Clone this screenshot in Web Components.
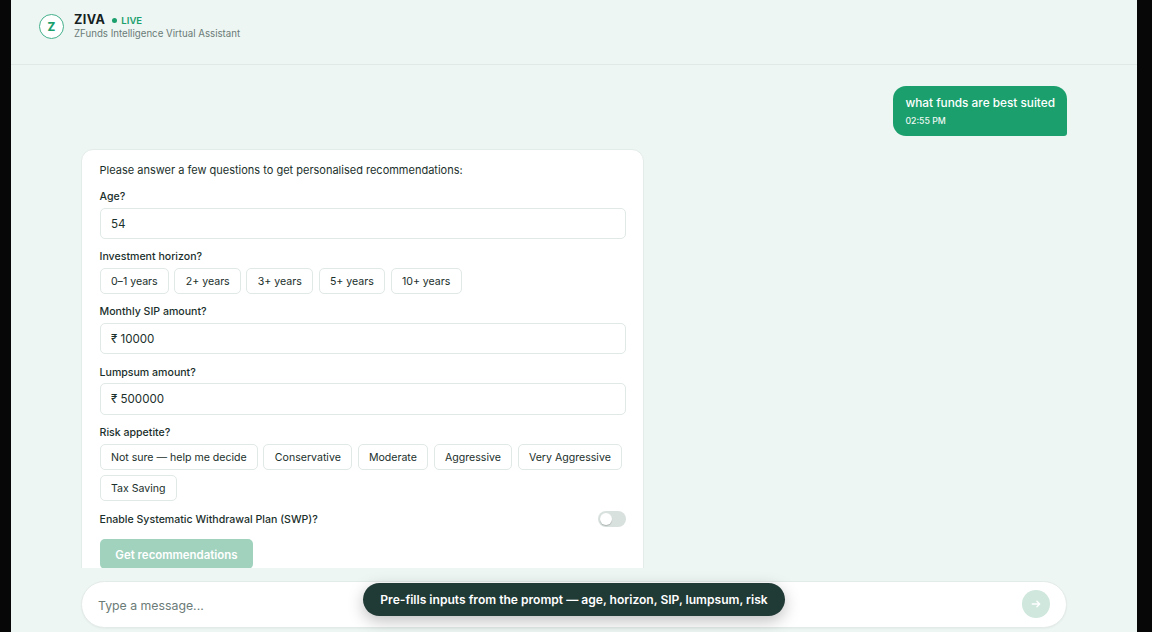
<!DOCTYPE html>
<html lang="en">
<head>
<meta charset="utf-8">
<title>ZIVA</title>
<style>
  html, body { height: 100%; margin: 0; }
  body {
    background: #070707;
    color: #1b302c;
    font-family: Inter, "Noto Sans", sans-serif;
    overflow: hidden;
    --green: #1b9f6d;
    --mint: #edf6f3;
    --line: #e0e9e6;
    --muted: #6b7b77;
  }
</style>
</head>
<body>
<ziva-app>
  <ziva-header slot="header" name="ZIVA" tagline="ZFunds Intelligence Virtual Assistant"></ziva-header>

  <user-message time="02:55 PM">what funds are best suited</user-message>

  <question-card>
    <span slot="intro">Please answer a few questions to get personalised recommendations:</span>
    <text-field label="Age?" value="54"></text-field>
    <chip-group label="Investment horizon?">
      <option-chip>0–1 years</option-chip>
      <option-chip>2+ years</option-chip>
      <option-chip>3+ years</option-chip>
      <option-chip>5+ years</option-chip>
      <option-chip>10+ years</option-chip>
    </chip-group>
    <text-field label="Monthly SIP amount?" value="₹ 10000"></text-field>
    <text-field label="Lumpsum amount?" value="₹ 500000"></text-field>
    <chip-group label="Risk appetite?">
      <option-chip>Not sure — help me decide</option-chip>
      <option-chip>Conservative</option-chip>
      <option-chip>Moderate</option-chip>
      <option-chip>Aggressive</option-chip>
      <option-chip>Very Aggressive</option-chip>
      <option-chip>Tax Saving</option-chip>
    </chip-group>
    <toggle-row>Enable Systematic Withdrawal Plan (SWP)?</toggle-row>
    <submit-button>Get recommendations</submit-button>
  </question-card>

  <message-composer slot="composer" placeholder="Type a message..."></message-composer>
  <caption-pill slot="caption">Pre-fills inputs from the prompt — age, horizon, SIP, lumpsum, risk</caption-pill>
</ziva-app>

<script>
class BaseElement extends HTMLElement {
  constructor() {
    super()
    this.attachShadow({ mode: "open" })
    this.shadowRoot.innerHTML = `${this.css}${this.html}`
  }
}

class ZivaApp extends BaseElement {
  get css() {
    return /*html*/`
      <style>
        :host {
          box-sizing: border-box;
          display: flex;
          flex-direction: column;
          height: 632px;
          margin: 0 15px 0 11px;
          background: var(--mint);
          position: relative;
        }

        main {
          box-sizing: border-box;
          height: 503px;
          padding: 21px 70px 0 70.4px;
          display: flex;
          flex-direction: column;
          gap: 13px;
          overflow: hidden;
        }

        footer { padding: 13px 70px 0 70.4px; }
      </style>
    `
  }

  get html() {
    return /*html*/`
      <slot name="header"></slot>
      <main><slot></slot></main>
      <footer><slot name="composer"></slot></footer>
      <slot name="caption"></slot>
    `
  }
}

class ZivaHeader extends BaseElement {
  get css() {
    return /*html*/`
      <style>
        :host {
          box-sizing: border-box;
          display: flex;
          align-items: flex-start;
          gap: 10px;
          height: 65px;
          padding: 12px 28px 0;
          border-bottom: 1px solid var(--line);
        }

        .logo {
          box-sizing: border-box;
          display: grid;
          place-items: center;
          width: 25px;
          height: 25px;
          margin-top: 1.5px;
          padding-top: 1px;
          border: 1px solid #43b08a;
          border-radius: 50%;
          background: #fff;
          color: var(--green);
          font-size: 11.5px;
          font-weight: 800;
        }

        .top { display: flex; align-items: center; height: 15px; }
        .name { color: #14211f; font-size: 12.6px; font-weight: 700; letter-spacing: 0.4px; }
        .dot { width: 5px; height: 5px; margin: 1px 4px 0 7px; border-radius: 50%; background: var(--green); }
        .live { color: var(--green); font-size: 9.6px; font-weight: 600; margin-top: 1px; }
        .tagline { color: var(--muted); font-size: 9.7px; line-height: 13px; }
      </style>
    `
  }

  get html() {
    const name = this.getAttribute('name')
    return /*html*/`
      <div class="logo">${name[0]}</div>
      <div>
        <div class="top">
          <span class="name">${name}</span><span class="dot"></span><span class="live">LIVE</span>
        </div>
        <div class="tagline">${this.getAttribute('tagline')}</div>
      </div>
    `
  }
}

class UserMessage extends BaseElement {
  get css() {
    return /*html*/`
      <style>
        :host {
          box-sizing: border-box;
          display: block;
          flex: none;
          align-self: flex-end;
          height: 50px;
          padding: 9px 12px 0;
          border-radius: 13px 13px 3px 13px;
          background: var(--green);
          color: #fff;
          white-space: nowrap;
        }

        .text { font-size: 11.8px; font-weight: 500; line-height: 17px; }
        time { display: block; margin-top: 3px; font-size: 8.75px; font-weight: 500; line-height: 13px; opacity: 0.92; }
      </style>
    `
  }

  get html() {
    return /*html*/`
      <div class="text"><slot></slot></div>
      <time>${this.getAttribute('time')}</time>
    `
  }
}

class QuestionCard extends BaseElement {
  get css() {
    return /*html*/`
      <style>
        :host {
          box-sizing: border-box;
          display: flex;
          flex: none;
          flex-direction: column;
          gap: 10.45px;
          width: 562.8px;
          height: 450px;
          padding: 13px 17.15px;
          border: 1px solid #e3ece9;
          border-radius: 12px;
          background: #fff;
        }

        .intro { margin-bottom: 1.6px; font-size: 11px; line-height: 14px; white-space: nowrap; }
      </style>
    `
  }

  get html() {
    return /*html*/`
      <div class="intro"><slot name="intro"></slot></div>
      <slot></slot>
    `
  }
}

class TextField extends BaseElement {
  get css() {
    return /*html*/`
      <style>
        :host { display: block; }
        label { display: block; margin-bottom: 2.9px; font-size: 10.58px; font-weight: 500; line-height: 15.6px; }

        .input {
          box-sizing: border-box;
          height: 31.5px;
          padding: 0 10.4px;
          border: 1px solid var(--line);
          border-radius: 5px;
          font-size: 11.6px;
          line-height: 31.3px;
        }
      </style>
    `
  }

  get html() {
    return /*html*/`
      <label>${this.getAttribute('label')}</label>
      <div class="input">${this.getAttribute('value')}</div>
    `
  }
}

class ChipGroup extends BaseElement {
  get css() {
    return /*html*/`
      <style>
        :host { display: block; }
        .label { margin-bottom: 3px; font-size: 10.58px; font-weight: 500; line-height: 15.6px; }
        .chips { display: flex; flex-wrap: wrap; gap: 5px 5.3px; }
      </style>
    `
  }

  get html() {
    return /*html*/`
      <div class="label">${this.getAttribute('label')}</div>
      <div class="chips"><slot></slot></div>
    `
  }
}

class OptionChip extends BaseElement {
  get css() {
    return /*html*/`
      <style>
        :host {
          box-sizing: border-box;
          display: block;
          height: 26px;
          padding: 0 10.4px;
          border: 1px solid var(--line);
          border-radius: 5px;
          font-size: 10.58px;
          line-height: 25px;
          white-space: nowrap;
          cursor: pointer;
        }
      </style>
    `
  }

  get html() {
    return `<slot></slot>`
  }
}

class ToggleRow extends BaseElement {
  get css() {
    return /*html*/`
      <style>
        :host {
          display: flex;
          align-items: center;
          justify-content: space-between;
          height: 16px;
          font-size: 10.58px;
          font-weight: 500;
        }

        .text { padding-top: 1px; }

        .track {
          box-sizing: border-box;
          width: 28px;
          height: 16px;
          padding: 2px;
          border-radius: 8px;
          background: #d8e1de;
        }

        .thumb { width: 12px; height: 12px; border-radius: 50%; background: #fff; box-shadow: 0 1px 1px #0003; }
      </style>
    `
  }

  get html() {
    return /*html*/`
      <span class="text"><slot></slot></span>
      <div class="track" role="switch" aria-checked="false"><div class="thumb"></div></div>
    `
  }
}

class SubmitButton extends BaseElement {
  get css() {
    return /*html*/`
      <style>
        :host {
          display: block;
          align-self: flex-start;
          height: 29.3px;
          margin-top: 1.7px;
          padding: 0 15.8px;
          border-radius: 5px;
          background: #a0d2be;
          color: #fff;
          font-size: 11.45px;
          font-weight: 600;
          line-height: 32px;
        }
      </style>
    `
  }

  get html() {
    return `<slot></slot>`
  }
}

class MessageComposer extends BaseElement {
  get css() {
    return /*html*/`
      <style>
        :host {
          box-sizing: border-box;
          display: flex;
          align-items: center;
          justify-content: space-between;
          height: 47px;
          padding: 0 16px 0 15.6px;
          border: 1px solid #e3ebe8;
          border-radius: 24px;
          background: #fff;
          box-shadow: 0 1px 2px #0000000a;
        }

        .placeholder { color: var(--muted); font-size: 12.3px; padding-top: 2px; }
        .send { display: grid; place-items: center; width: 28px; height: 28px; margin-bottom: 1px; border-radius: 50%; background: #cfe7dc; }
      </style>
    `
  }

  get html() {
    return /*html*/`
      <span class="placeholder">${this.getAttribute('placeholder')}</span>
      <div class="send" role="button" aria-label="Send">
        <svg width="10" height="10" viewBox="0 0 10 10" fill="none" stroke="#fff" stroke-width="1.4" stroke-linecap="round" stroke-linejoin="round">
          <path d="M1.2 5h7.5M5.9 2.2L8.7 5 5.9 7.8"/>
        </svg>
      </div>
    `
  }
}

class CaptionPill extends BaseElement {
  get css() {
    return /*html*/`
      <style>
        /* floats over the composer */
        :host {
          box-sizing: border-box;
          position: absolute;
          bottom: 16.5px;
          left: 352px;
          width: 422px;
          height: 32.5px;
          border-radius: 17px;
          background: #203a36;
          color: #fff;
          font-size: 12.08px;
          font-weight: 600;
          line-height: 33px;
          text-align: center;
          white-space: nowrap;
          box-shadow: 0 5px 16px #00000040;
        }
      </style>
    `
  }

  get html() {
    return `<slot></slot>`
  }
}

customElements.define('ziva-app', ZivaApp)
customElements.define('ziva-header', ZivaHeader)
customElements.define('user-message', UserMessage)
customElements.define('question-card', QuestionCard)
customElements.define('text-field', TextField)
customElements.define('chip-group', ChipGroup)
customElements.define('option-chip', OptionChip)
customElements.define('toggle-row', ToggleRow)
customElements.define('submit-button', SubmitButton)
customElements.define('message-composer', MessageComposer)
customElements.define('caption-pill', CaptionPill)
</script>
</body>
</html>
